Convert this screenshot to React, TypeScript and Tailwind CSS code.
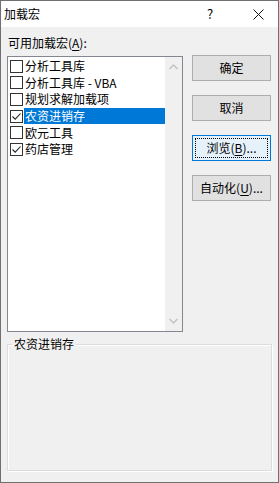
import { useState } from "react";

const addins = [
  { name: "分析工具库", checked: false },
  { name: "分析工具库 - VBA", checked: false },
  { name: "规划求解加载项", checked: false },
  { name: "农资进销存", checked: true },
  { name: "欧元工具", checked: false },
  { name: "药店管理", checked: true },
];

function CheckBox({ checked }: { checked: boolean }) {
  return (
    <span className="flex h-[13px] w-[13px] shrink-0 items-center justify-center border border-[#333] bg-white">
      {checked && (
        <svg width="11" height="11" viewBox="0 0 11 11">
          <path d="M1.5 5.5 L4.2 8.2 L9.5 2.5" fill="none" stroke="#222" strokeWidth="1.1" />
        </svg>
      )}
    </span>
  );
}

function DialogButton({ label, hotkey, after, focused }: { label: string; hotkey?: string; after?: string; focused?: boolean }) {
  return (
    <button
      className={
        focused
          ? "flex h-[26px] w-[79px] items-center justify-center border border-[#0078d7] bg-[#e5f1fb] p-[2px] text-[12px] text-black"
          : "flex h-[26px] w-[79px] items-center justify-center border border-[#adadad] bg-[#e1e1e1] text-[12px] text-black"
      }
    >
      <span className={focused ? "flex h-full w-full items-center justify-center border border-dotted border-black" : "flex items-center justify-center"}>
        {label}
        {hotkey && (
          <>
            (<span className="underline underline-offset-2">{hotkey}</span>)
          </>
        )}
        {after}
      </span>
    </button>
  );
}

export default function App() {
  const [selected, setSelected] = useState(3);

  return (
    <div className="flex h-[483px] w-[279px] flex-col border border-[#707070] bg-[#f0f0f0] font-['Noto_Sans_CJK_SC','Microsoft_YaHei',sans-serif] text-[12px] leading-[16px] text-black">
      <div className="flex h-[26px] shrink-0 items-center bg-white pl-[3px]">
        <span className="flex-1">加载宏</span>
        <span className="w-[12px] text-center text-[13px]">?</span>
        <span className="ml-[36px] mr-[14px] flex w-[12px] items-center justify-center">
          <svg width="11" height="11" viewBox="0 0 11 11">
            <path d="M0.5 0.5 L10.5 10.5 M10.5 0.5 L0.5 10.5" stroke="#111" strokeWidth="1" />
          </svg>
        </span>
      </div>

      <div className="flex flex-1 flex-col px-[6px] pt-[8px]">
        <div className="pl-[1px]">
          可用加载宏(<span className="underline underline-offset-2">A</span>):
        </div>

        <div className="mt-[5px] flex gap-[9px]">
          <div className="flex h-[276px] w-[176px] border border-[#828790] bg-white">
            <ul className="flex-1 pl-[2px] pt-[1px]">
              {addins.map((item, i) => (
                <li key={item.name} className="flex h-[16.6px] items-center" onClick={() => setSelected(i)}>
                  <CheckBox checked={item.checked} />
                  <span
                    className={
                      i === selected
                        ? "ml-[1px] flex h-[16px] flex-1 items-center bg-[#0078d7] pl-[1px] text-white"
                        : "ml-[1px] flex h-[16px] flex-1 items-center pl-[1px]"
                    }
                  >
                    {item.name}
                  </span>
                </li>
              ))}
            </ul>
            <div className="flex w-[17px] flex-col items-center justify-between bg-[#f0f0f0] py-[7px]">
              <svg width="9" height="6" viewBox="0 0 9 6">
                <path d="M0.5 5 L4.5 1 L8.5 5" fill="none" stroke="#c2c2c2" strokeWidth="1.4" />
              </svg>
              <svg width="9" height="6" viewBox="0 0 9 6">
                <path d="M0.5 1 L4.5 5 L8.5 1" fill="none" stroke="#c2c2c2" strokeWidth="1.4" />
              </svg>
            </div>
          </div>

          <div className="-mt-[1px] flex flex-col gap-[14px]">
            <DialogButton label="确定" />
            <DialogButton label="取消" />
            <DialogButton label="浏览" hotkey="B" after="..." focused />
            <DialogButton label="自动化" hotkey="U" after="..." />
          </div>
        </div>

        <fieldset className="mt-[4px] h-[135px] w-[265px] border border-[#dcdcdc] shadow-[inset_1px_1px_0_#ffffff,1px_1px_0_#ffffff]">
          <legend className="ml-[4px] px-[2px]">农资进销存</legend>
        </fieldset>
      </div>
    </div>
  );
}
